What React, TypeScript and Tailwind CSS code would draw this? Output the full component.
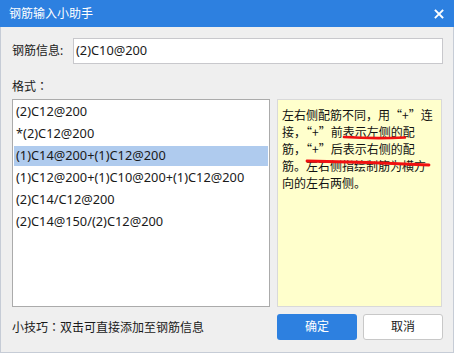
import React from 'react';

const FONT = "font-['Noto_Sans','Noto_Sans_CJK_SC',sans-serif]";
const CJK = "font-['Noto_Sans_CJK_SC',sans-serif]";

const formats = [
  '(2)C12@200',
  '*(2)C12@200',
  '(1)C14@200+(1)C12@200',
  '(1)C12@200+(1)C10@200+(1)C12@200',
  '(2)C14/C12@200',
  '(2)C14@150/(2)C12@200',
];

const CloseIcon: React.FC = () => (
  <svg width="10" height="10" viewBox="0 0 10 10" className="block">
    <path d="M1.5 1.5 L8.5 8.5 M8.5 1.5 L1.5 8.5" stroke="white" strokeWidth="1.8" strokeLinecap="square" />
  </svg>
);

// centred full-width colon, as the dialog font draws it
const Colon: React.FC = () => <span className="font-['Noto_Sans_CJK_TC',sans-serif]">：</span>;

const TipBox: React.FC = () => (
  <div className={`relative w-[165px] h-full bg-[#ffffcc] border border-[#d9d9d9] pl-[4px] pt-[6px] text-[12px] leading-[17px] text-[#111] whitespace-nowrap ${CJK}`}>
    <div>左右侧配筋不同，用“+”连</div>
    <div>接，“+”前表示左侧的配</div>
    <div>筋，“+”后表示右侧的配</div>
    <div>筋。左右侧指绘制筋为横方</div>
    <div>向的左右两侧。</div>
    {/* red marker strokes drawn over the text */}
    <svg className="absolute inset-0 pointer-events-none" width="165" height="208">
      <path d="M66 37 Q96 39 127 37.5" stroke="#f01010" strokeWidth="2.6" fill="none" strokeLinecap="round" />
      <path d="M29 61 Q90 62 151 65" stroke="#f01010" strokeWidth="2.8" fill="none" strokeLinecap="round" />
    </svg>
  </div>
);

export default function App() {
  return (
    <div className={`w-[454px] h-[353px] flex flex-col bg-[#efefef] ${FONT} text-[12px] text-[#1a1a1a]`}>
      <div className="h-[27px] shrink-0 bg-[#2d80e0] flex items-center justify-between pl-[9px] pr-[10px]">
        <span className="text-white text-[12px]">钢筋输入小助手</span>
        <CloseIcon />
      </div>
      <div className="flex-1 flex flex-col border-x border-b border-[#c6ccd6] pl-[11px] pr-[10px]">
        <div className="mt-[11px] flex items-center h-[26px]">
          <span className="w-[61px] shrink-0">钢筋信息:</span>
          <div className="flex-1 h-full bg-white border border-[#c8c8cc] flex items-center pl-[2px] text-[12.8px]">
            (2)C10@200
          </div>
        </div>
        <div className="mt-[13px] h-[17px] leading-[17px]">格式<Colon /></div>
        <div className="mt-[5px] flex h-[208px] gap-[7px]">
          <div className="w-[258px] h-full bg-white border border-[#ababab] p-[1px] pt-[2px] flex flex-col gap-[2px] text-[12.8px]">
            {formats.map((f, i) => (
              <div
                key={f}
                className={`h-[20px] flex items-center pl-[2px] ${i === 2 ? 'bg-[#afcbee]' : ''}`}
              >
                {f}
              </div>
            ))}
          </div>
          <TipBox />
        </div>
        <div className="mt-[7px] flex items-center h-[26px]">
          <span className="flex-1">小技巧<Colon />双击可直接添加至钢筋信息</span>
          <div className="flex gap-[6px]">
            <button className="w-[80px] h-[26px] rounded-[3px] bg-[#2d80e0] text-white text-[12px]">确定</button>
            <button className="w-[80px] h-[26px] rounded-[3px] bg-white border border-[#c8c8c8] text-[12px]">取消</button>
          </div>
        </div>
      </div>
    </div>
  );
}
